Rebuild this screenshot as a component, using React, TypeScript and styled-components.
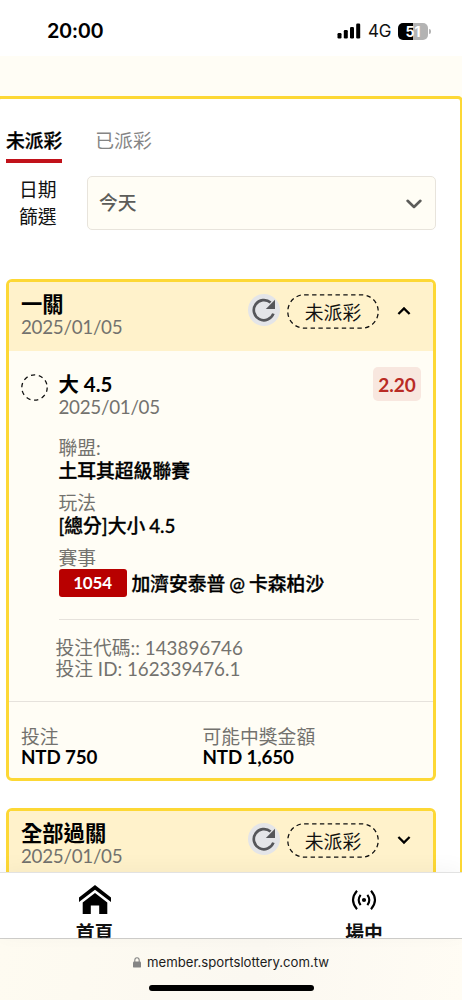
import React from "react";
import styled, { createGlobalStyle } from "styled-components";

const Global = createGlobalStyle`
  * { box-sizing: border-box; }
  html, body { margin: 0; background: #fff; }
  body { font-family: Lato, "Noto Sans CJK TC", sans-serif; font-size: 18.8px; color: #111; overflow: hidden; }
`;

const Screen = styled.div`
  width: 462px;
  height: 1000px;
  overflow: hidden;
  display: flex;
  flex-direction: column;
  background: #fff;
`;

const StatusBar = styled.header`
  flex: none;
  height: 56px;
  padding: 6px 34px 0 47px;
  display: flex;
  align-items: center;
  justify-content: space-between;
  font-family: Inter, sans-serif;
`;
const Clock = styled.span`
  font-size: 20px;
  font-weight: 600;
  letter-spacing: -0.4px;
  color: #000;
`;
const Indicators = styled.div`
  display: flex;
  align-items: center;
`;
const Network = styled.span`
  font-size: 17px;
  width: 22px;
  margin: 0 8px 0 7px;
  letter-spacing: -0.3px;
  white-space: nowrap;
`;
const Battery = styled.div`
  position: relative;
  width: 30px;
  height: 17px;
  border-radius: 5px;
  background: linear-gradient(90deg, #000 51%, #b3b3b3 51%);
  color: #fff;
  font-size: 14px;
  font-weight: 700;
  line-height: 17px;
  text-align: center;
  &::after {
    content: "";
    position: absolute;
    left: 31px;
    top: 6px;
    width: 2px;
    height: 5px;
    border-radius: 0 2px 2px 0;
    background: #b3b3b3;
  }
`;

const Viewport = styled.main`
  flex: 1;
  min-height: 0;
  overflow: hidden;
  background: #fffdf5;
  padding-top: 40px;
`;
const Frame = styled.section`
  width: 467px;
  height: 900px;
  margin-left: -4px;
  padding: 0 24px 0 7px;
  border: 3px solid #fdd835;
  border-radius: 5px;
  background: #fff;
`;

const Tabs = styled.nav`
  display: flex;
  gap: 33px;
  padding-top: 26px;
`;
const Tab = styled.div<{ $active?: boolean }>`
  height: 38px;
  line-height: 31px;
  font-weight: ${(p) => (p.$active ? 500 : 400)};
  -webkit-text-stroke: ${(p) => (p.$active ? "0.3px #000" : "0")};
  color: ${(p) => (p.$active ? "#000" : "#858585")};
  border-bottom: 4px solid ${(p) => (p.$active ? "#c1121a" : "transparent")};
`;

const Filter = styled.div`
  display: flex;
  padding-top: 13px;
`;
const FilterLabel = styled.label`
  width: 38px;
  margin: 0 30px 0 13px;
  line-height: 27px;
  white-space: pre-line;
`;
const Select = styled.div`
  width: 349px;
  height: 54px;
  padding: 0 13px 0 11px;
  display: flex;
  align-items: center;
  justify-content: space-between;
  border: 1px solid #e8e4dc;
  border-radius: 5px;
  background: #fffdf5;
  color: #5c5c59;
  font-weight: 500;
  line-height: 28px;
  & > svg { margin-top: 2px; }
`;

const Card = styled.article`
  width: 430px;
  margin-top: 49px;
  border: 3px solid #fdd835;
  border-radius: 6px;
  background: #fffdf5;
  overflow: hidden;
  & + & { margin-top: 27px; }
`;
const CardHead = styled.div`
  height: 69px;
  padding: 11px 22px 0 12px;
  display: flex;
  background: #fff2cb;
`;
const Titles = styled.div`
  flex: 1;
`;
const CardTitle = styled.div`
  font-size: 21.3px;
  font-weight: 700;
  line-height: 23px;
  color: #000;
`;
const Muted = styled.div`
  line-height: 22px;
  color: #73726e;
`;
const DateLine = styled(Muted)`
  letter-spacing: -0.28px;
`;
const Refresh = styled.div`
  width: 32px;
  height: 32px;
  border-radius: 50%;
  background: #e4e5e8;
  margin: 1px 7px 0 0;
`;
const Pill = styled.div`
  position: relative;
  width: 92px;
  height: 35px;
  line-height: 37px;
  text-align: center;
  color: #111;
  margin: 1px 18px 0 0;
  & > svg { position: absolute; left: 0; top: 0; }
`;
const HeadChevron = styled.div`
  padding-top: 4px;
`;

const Body = styled.div`
  display: flex;
  height: 351px;
  padding: 0 12px;
  border-bottom: 1px solid #e6e2dc;
`;
const Marker = styled.div`
  width: 37.5px;
  padding-top: 23px;
`;
const Details = styled.div`
  flex: 1;
`;
const Selection = styled.div`
  display: flex;
  justify-content: space-between;
  padding-top: 16px;
`;
const Pick = styled.div`
  padding-top: 5px;
  font-size: 20.4px;
  font-weight: 700;
  line-height: 24px;
  color: #000;
`;
const Odds = styled.div`
  width: 48px;
  height: 34px;
  line-height: 36px;
  border-radius: 5px;
  background: #f8e7df;
  color: #b92b25;
  font-size: 19px;
  font-weight: 700;
  text-align: center;
`;
const Field = styled.div`
  margin-bottom: 10px;
`;
const FieldList = styled.div`
  padding-top: 19px;
`;
const Value = styled.div`
  display: flex;
  align-items: center;
  line-height: 23px;
  font-weight: 500;
  -webkit-text-stroke: 0.3px #000;
  word-spacing: -0.8px;
  color: #000;
  white-space: pre;
`;
const Code = styled.span`
  width: 68px;
  height: 28px;
  line-height: 28px;
  margin-right: 5px;
  border-radius: 3px;
  background: #b80000;
  color: #fff;
  font-size: 17px;
  font-weight: 700;
  -webkit-text-stroke: 0;
  letter-spacing: -0.2px;
  text-align: center;
`;
const Reference = styled.div`
  width: 360px;
  margin-top: 22px;
  padding-top: 18px;
  border-top: 1px solid #e6e2dc;
`;
const RefLine = styled.div`
  margin-left: -3px;
  line-height: 20.5px;
  color: #73726e;
`;
const Totals = styled.div`
  height: 76px;
  padding: 24px 12px 0;
  display: grid;
  grid-template-columns: 181.5px 1fr;
`;
const Amount = styled.div`
  margin-top: -1px;
  line-height: 19px;
  font-weight: 700;
  letter-spacing: -0.15px;
  color: #000;
`;

const BottomNav = styled.nav`
  position: relative;
  flex: none;
  height: 66px;
  display: flex;
  border-top: 1px solid #e2e2e2;
  background: #fff;
  overflow: hidden;
  box-shadow: 0 -4px 20px rgba(0, 0, 0, 0.04);
`;
const NavItem = styled.div<{ $width: number }>`
  width: ${(p) => p.$width}px;
  flex: none;
  display: flex;
  flex-direction: column;
  align-items: center;
  padding-top: 8px;
  font-weight: 700;
  line-height: 26px;
  & > svg { flex: none; margin-bottom: 3px; }
`;

const BrowserBar = styled.footer`
  flex: none;
  height: 62px;
  border-top: 1px solid #cfcecb;
  background: linear-gradient(100deg, #fefbf1, #fbf8f1 55%, #fffcf4);
  display: flex;
  flex-direction: column;
  align-items: center;
`;
const Address = styled.div`
  display: flex;
  align-items: center;
  gap: 6px;
  height: 46px;
  font-family: Inter, sans-serif;
  font-size: 13.15px;
  color: #1c1c1c;
`;
const HomeIndicator = styled.div`
  width: 165px;
  height: 6px;
  border-radius: 3px;
  background: #000;
`;

const Chevron = ({ up }: { up?: boolean }) => (
  <svg width="14" height="10" viewBox="0 0 14 10" fill="none" stroke="#000" strokeWidth="2.3">
    <path d={up ? "M1.4 8L7 2.4L12.6 8" : "M1.4 2L7 7.6L12.6 2"} />
  </svg>
);

const CardHeader = ({ title, open }: { title: string; open?: boolean }) => (
  <CardHead>
    <Titles>
      <CardTitle>{title}</CardTitle>
      <DateLine>2025/01/05</DateLine>
    </Titles>
    <Refresh>
      <svg width="32" height="32" viewBox="0 0 32 32">
        <path d="M25.4 19.6A10.1 10.1 0 1 1 22.6 8.6" fill="none" stroke="#55565a" strokeWidth="2.7" />
        <path d="M27 5.8V15H17.8Z" fill="#55565a" />
      </svg>
    </Refresh>
    <Pill>
      <svg width="92" height="35">
        <rect x="0.8" y="0.8" width="90.4" height="33.4" rx="16.5" fill="none" stroke="#111" strokeWidth="1.3" strokeDasharray="4.4 3.4" />
      </svg>
      未派彩
    </Pill>
    <HeadChevron>
      <Chevron up={open} />
    </HeadChevron>
  </CardHead>
);

export default function App() {
  return (
    <Screen>
      <Global />
      <StatusBar>
        <Clock>20:00</Clock>
        <Indicators>
          <svg width="24" height="16" viewBox="0 0 24 16">
            <rect x="0.5" y="10" width="4" height="5.5" rx="1.2" />
            <rect x="6.8" y="7" width="4" height="8.5" rx="1.2" />
            <rect x="13" y="4" width="4" height="11.5" rx="1.2" />
            <rect x="19.2" y="0.5" width="4" height="15" rx="1.2" />
          </svg>
          <Network>4G</Network>
          <Battery>51</Battery>
        </Indicators>
      </StatusBar>
      <Viewport>
        <Frame>
          <Tabs>
            <Tab $active>未派彩</Tab>
            <Tab>已派彩</Tab>
          </Tabs>
          <Filter>
            <FilterLabel>{"日期\n篩選"}</FilterLabel>
            <Select>
              <span>今天</span>
              <svg width="16" height="10" viewBox="0 0 16 10" fill="none" stroke="#5c5c59" strokeWidth="2.6" strokeLinecap="round" strokeLinejoin="round">
                <path d="M1.6 1.8L8 8L14.4 1.8" />
              </svg>
            </Select>
          </Filter>
          <Card>
            <CardHeader title="一關" open />
            <Body>
              <Marker>
                <svg width="27" height="27">
                  <circle cx="13.5" cy="13.5" r="12.7" fill="none" stroke="#111" strokeWidth="1.3" strokeDasharray="4.3 3.68" />
                </svg>
              </Marker>
              <Details>
                <Selection>
                  <div>
                    <Pick>大 4.5</Pick>
                    <DateLine>2025/01/05</DateLine>
                  </div>
                  <Odds>2.20</Odds>
                </Selection>
                <FieldList>
                  <Field>
                    <Muted>聯盟:</Muted>
                    <Value>土耳其超級聯賽</Value>
                  </Field>
                  <Field>
                    <Muted>玩法</Muted>
                    <Value>[總分]大小 4.5</Value>
                  </Field>
                  <Field>
                    <Muted>賽事</Muted>
                    <Value>
                      <Code>1054</Code>加濟安泰普 @ 卡森柏沙
                    </Value>
                  </Field>
                </FieldList>
                <Reference>
                  <RefLine>投注代碼:: 143896746</RefLine>
                  <RefLine>投注 ID: 162339476.1</RefLine>
                </Reference>
              </Details>
            </Body>
            <Totals>
              <div>
                <Muted>投注</Muted>
                <Amount>NTD 750</Amount>
              </div>
              <div>
                <Muted>可能中獎金額</Muted>
                <Amount>NTD 1,650</Amount>
              </div>
            </Totals>
          </Card>
          <Card>
            <CardHeader title="全部過關" />
          </Card>
        </Frame>
      </Viewport>
      <BottomNav>
        <NavItem $width={189}>
          <svg width="34" height="36" viewBox="0 0 34 36">
            <path d="M1 16.5V21L17 8.7L33 21V16.5L17 4Z" />
            <path d="M4.7 21.5L17 12L29.3 21.5V33H21.2V24.5H12.8V33H4.7Z" />
          </svg>
          首頁
        </NavItem>
        <NavItem $width={350}>
          <svg width="26" height="36" viewBox="0 0 26 36" fill="none" stroke="#000" strokeWidth="2.1">
            <circle cx="13" cy="19" r="2.1" fill="#000" stroke="none" />
            <path d="M9.6 13.8Q5.8 19 9.6 24.2M16.4 13.8Q20.2 19 16.4 24.2M6 9.8Q-2 19 6 28.2M20 9.8Q28 19 20 28.2" />
          </svg>
          場中
        </NavItem>
      </BottomNav>
      <BrowserBar>
        <Address>
          <svg width="8" height="11" viewBox="0 0 8 11">
            <rect x="0" y="4.6" width="8" height="6" rx="1.2" fill="#858585" />
            <path d="M1.8 5V3.2a2.2 2.4 0 0 1 4.4 0V5" fill="none" stroke="#858585" strokeWidth="1.1" />
          </svg>
          member.sportslottery.com.tw
        </Address>
        <HomeIndicator />
      </BrowserBar>
    </Screen>
  );
}
